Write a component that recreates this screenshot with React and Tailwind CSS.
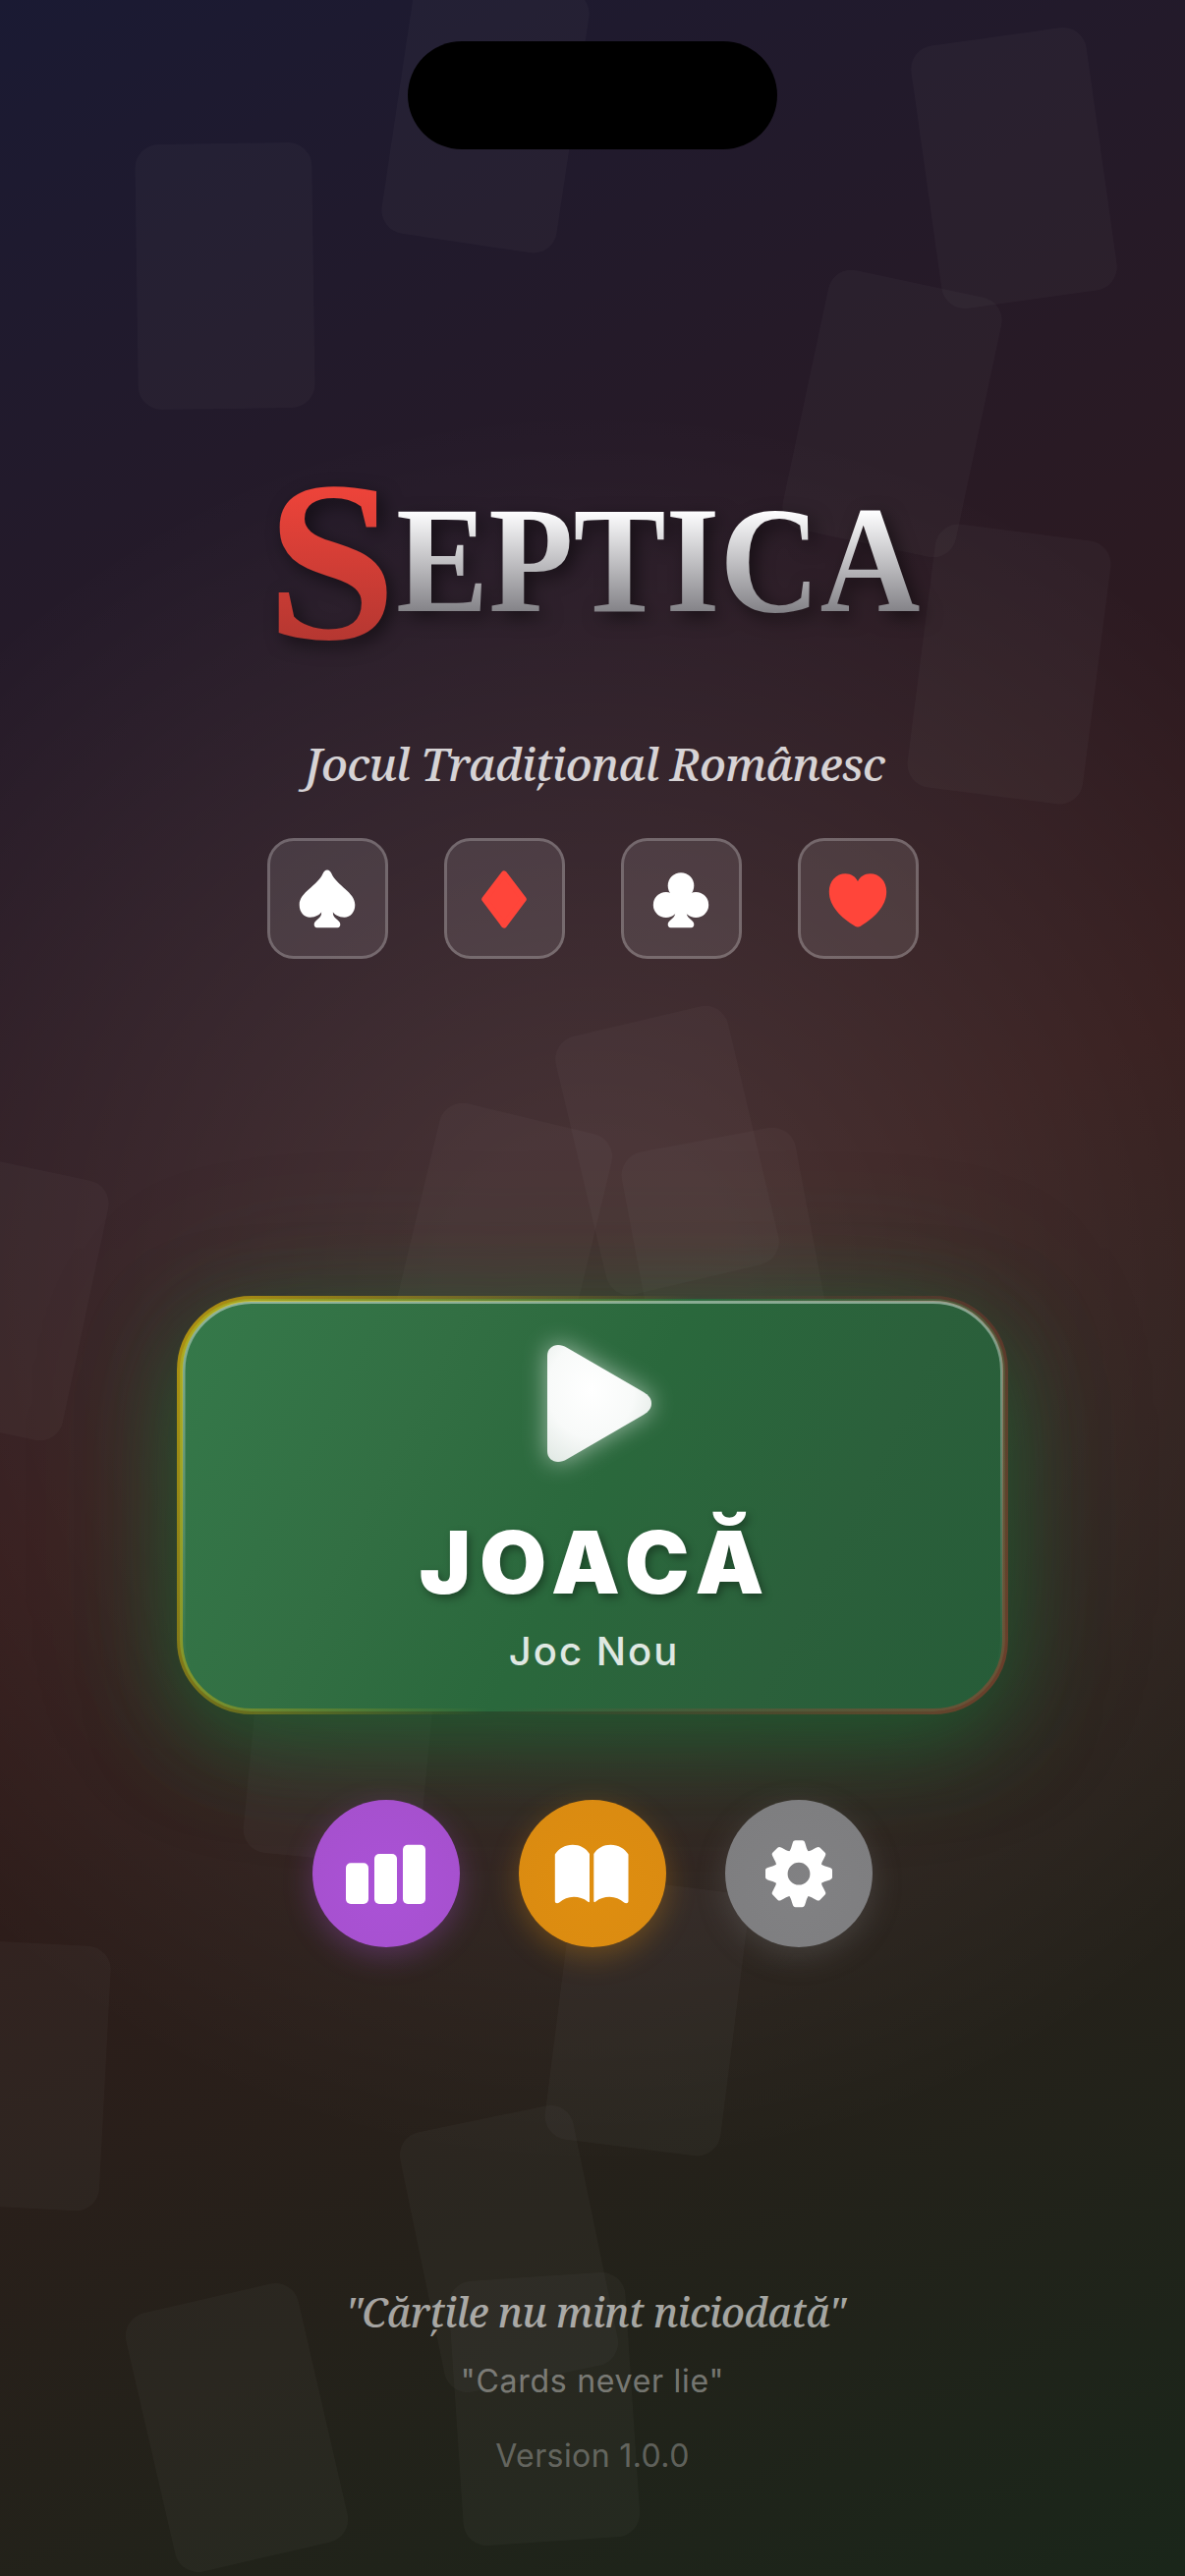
import React from "react";

const FLOATING_CARDS = [
  { x: 229, y: 281, r: -0.8 },
  { x: 493.5, y: 113.5, r: 8.5 },
  { x: 1031.5, y: 171, r: -8 },
  { x: 907.5, y: 421, r: 12 },
  { x: 1026.5, y: 676, r: 7.3 },
  { x: 679, y: 1171, r: -13.3 },
  { x: 509, y: 1270, r: 13.5 },
  { x: 741.5, y: 1293, r: -10.7 },
  { x: -1.5, y: 1320, r: 12 },
  { x: 348, y: 1758, r: 5.5 },
  { x: 17.3, y: 2111.7, r: 3 },
  { x: 657.5, y: 2052, r: 7.2 },
  { x: 518, y: 2289, r: -11.7 },
  { x: 554, y: 2451.5, r: -3.8 },
  { x: 240.5, y: 2471, r: -13 },
];

function FloatingCards() {
  return (
    <div className="pointer-events-none absolute inset-0 overflow-hidden">
      {FLOATING_CARDS.map((c, i) => (
        <div
          key={i}
          className="absolute -mt-[135px] -ml-[90px] h-[270px] w-[180px] rounded-[24px] bg-white/[0.028]"
          style={{ left: c.x, top: c.y, transform: `rotate(${c.r}deg)` }}
        />
      ))}
    </div>
  );
}

const STEM =
  "M60 66 L66 73.5 C65.5 76 66.5 78 69.5 80.5 C72 82.5 73.3 84 73.3 86 C73.3 88 72.3 89.2 70.5 89.2 L49.5 89.2 C47.7 89.2 46.7 88 46.7 86 C46.7 84 48 82.5 50.5 80.5 C53.5 78 54.5 76 54 73.5 Z";

function Spade() {
  return (
    <svg viewBox="0 0 120 120" className="size-[120px] shrink-0 fill-white">
      <path d="M60 30.5 C62 30.5 63.3 32 64.2 33.8 C70 47 88.3 53 88.3 66 C88.3 73.5 83.5 78.7 77.5 78.7 C71.5 78.7 67 75.5 65.6 73 L54.4 73 C53 75.5 48.5 78.7 42.5 78.7 C36.5 78.7 31.7 73.5 31.7 66 C31.7 53 50 47 55.8 33.8 C56.7 32 58 30.5 60 30.5 Z" />
      <path d={STEM} />
    </svg>
  );
}

function Diamond() {
  return (
    <svg viewBox="0 0 120 120" className="size-[120px] shrink-0 fill-[#ff453a] stroke-[#ff453a]">
      <path d="M60 34.3 L79.8 60.3 L60 86.6 L40.2 60.3 Z" strokeWidth="6" strokeLinejoin="round" />
    </svg>
  );
}

function Club() {
  return (
    <svg viewBox="0 0 120 120" className="size-[120px] shrink-0 fill-white">
      <circle cx="60" cy="46.5" r="13.3" />
      <circle cx="44.8" cy="66" r="13" />
      <circle cx="75.2" cy="66" r="13" />
      <path d="M53 52 L67 52 L70 62 L66 74 L54 74 L50 62 Z" />
      <path d={STEM} />
    </svg>
  );
}

function Heart() {
  return (
    <svg viewBox="0 0 120 120" className="size-[120px] shrink-0 fill-[#ff453a]">
      <path d="M60 42.3 C62 37.3 67 34.3 72.5 34.3 C82 34.3 89.2 42 89.2 52.5 C89.2 68 76 79.5 63.5 87.3 C62 88.3 60.8 88.6 60 88.6 C59.2 88.6 58 88.3 56.5 87.3 C44 79.5 30.8 68 30.8 52.5 C30.8 42 38 34.3 47.5 34.3 C53 34.3 58 37.3 60 42.3 Z" />
    </svg>
  );
}

function SuitTile({ children }) {
  return (
    <div className="flex size-[123px] items-center justify-center rounded-[27px] border-[3px] border-white/30 bg-white/10 bg-clip-padding">
      {children}
    </div>
  );
}

function PlayIcon() {
  return (
    <svg
      viewBox="0 0 106 119"
      className="h-[119px] w-[106px] overflow-visible drop-shadow-[0_0_12px_rgba(255,255,255,0.55)]"
    >
      <defs>
        <radialGradient id="play" cx="0.42" cy="0.38" r="0.75">
          <stop offset="0" stopColor="#ffffff" />
          <stop offset="0.55" stopColor="#f8faf9" />
          <stop offset="1" stopColor="#dfe7e2" />
        </radialGradient>
      </defs>
      <path
        fill="url(#play)"
        d="M0 11 C0 4 5 0 11 0 C14 0 17 1 20 2.7 L98 48 C103 51 106 54.5 106 59.5 C106 64.5 103 68 98 71 L20 116.3 C17 118 14 119 11 119 C5 119 0 115 0 108 Z"
      />
    </svg>
  );
}

function ButtonRim() {
  return (
    <svg viewBox="0 0 840 420" className="absolute inset-0 size-full overflow-visible fill-none">
      <defs>
        <linearGradient id="shine" gradientUnits="userSpaceOnUse" x1="0" y1="0" x2="0" y2="420">
          <stop offset="0" stopColor="#fff" stopOpacity="0.45" />
          <stop offset="0.9" stopColor="#fff" stopOpacity="0" />
        </linearGradient>
        <linearGradient id="rim" gradientUnits="userSpaceOnUse" x1="0" y1="0" x2="840" y2="420">
          <stop offset="0" stopColor="#ffcc00" stopOpacity="0.62" />
          <stop offset="0.5" stopColor="#ffcc00" stopOpacity="0" />
          <stop offset="0.5" stopColor="#ff3b30" stopOpacity="0" />
          <stop offset="1" stopColor="#ff3b30" stopOpacity="0.32" />
        </linearGradient>
      </defs>
      <rect x="4" y="3.5" width="832.5" height="413" rx="70" stroke="url(#shine)" strokeWidth="3" />
      <rect x="0" y="0" width="840" height="420" rx="73" stroke="url(#rim)" strokeWidth="6" />
    </svg>
  );
}

function PlayButton() {
  return (
    <button className="relative flex h-[420px] w-[840px] flex-col items-center rounded-[73px] bg-[linear-gradient(116.6deg,#35794a_0%,#326f43_28%,#2a683c_50%,#2b603b_75%,#265c38_100%)] shadow-[0_30px_90px_rgba(24,110,52,0.6),0_6px_150px_rgba(24,110,52,0.32)]">
      <ButtonRim />
      <div className="relative mt-[47px] ml-[14px] flex h-[119px]">
        <PlayIcon />
      </div>
      <div className="relative mt-[58px] ml-[7px] h-[88px] font-['Inter',sans-serif] text-[88px] leading-none font-black tracking-[9px] text-white [text-shadow:3px_4px_8px_rgba(0,0,0,0.35)]">
        JOACĂ
      </div>
      <div className="relative mt-[27px] ml-[3px] font-['Inter',sans-serif] text-[40px] leading-none font-[450] tracking-[2px] text-white/85">
        Joc Nou
      </div>
    </button>
  );
}

function Bars() {
  return (
    <svg viewBox="0 0 150 150" className="size-[150px] fill-white">
      <rect x="34" y="64.3" width="23" height="41.7" rx="5" />
      <rect x="63" y="55" width="23" height="51" rx="5" />
      <rect x="92" y="45.7" width="23" height="60.3" rx="5" />
    </svg>
  );
}

function Book() {
  return (
    <svg viewBox="0 0 150 150" className="size-[150px] fill-white">
      <path d="M36.8 55.5 C40.5 49.5 47 45.7 54.8 45.7 C62 45.7 68.5 49 72 55 L72 103 C72 104.5 71 104.5 70 103.5 C66 100.3 61 98.8 56 98.8 C50 98.8 45.5 101 41.5 104.2 C39.5 105.8 36.8 105.5 36.8 103 Z" />
      <path d="M111.5 55.5 C107.8 49.5 101.3 45.7 93.5 45.7 C86.3 45.7 79.8 49 76.3 55 L76.3 103 C76.3 104.5 77.3 104.5 78.3 103.5 C82.3 100.3 87.3 98.8 92.3 98.8 C98.3 98.8 102.8 101 106.8 104.2 C108.8 105.8 111.5 105.5 111.5 103 Z" />
    </svg>
  );
}

function Gear() {
  return (
    <svg viewBox="0 0 150 150" className="size-[150px]">
      <g transform="translate(75 75.2)">
        {[0, 45, 90, 135, 180, 225, 270, 315].map((a) => (
          <path
            key={a}
            transform={`rotate(${a})`}
            className="fill-white"
            d="M-11 -21 C-8.5 -24 -7.8 -26 -7.2 -28.5 L-6.2 -31.6 C-5.7 -33.3 -4.9 -34 -3.4 -34 L3.4 -34 C4.9 -34 5.7 -33.3 6.2 -31.6 L7.2 -28.5 C7.8 -26 8.5 -24 11 -21 Z"
          />
        ))}
        <circle r="17.8" className="fill-none stroke-white" strokeWidth="12.8" />
      </g>
    </svg>
  );
}

export default function App() {
  return (
    <div className="relative h-[2622px] w-[1206px] overflow-hidden bg-[linear-gradient(155.3deg,#1a1a33_0%,#331a1a_50%,#1a261a_100%)]">
      <div className="absolute inset-0 bg-[radial-gradient(circle_900px_at_50%_50%,rgba(255,255,255,0.1)_0px,rgba(255,255,255,0.1)_150px,rgba(255,255,255,0)_900px)]" />
      <FloatingCards />
      <div className="absolute top-[42px] left-[415px] h-[110px] w-[376px] rounded-full bg-black" />

      <main className="relative flex h-full flex-col items-center">
        <h1 className="mt-[454px] flex h-[234px] w-full items-start pl-[271px] font-['Liberation_Serif',serif] leading-none font-bold drop-shadow-[6px_6px_9px_rgba(0,0,0,0.5)]">
          <span className="w-[132px] origin-left scale-x-[1.02] bg-[linear-gradient(to_bottom,#f0443a_15%,#b53731_85%)] bg-clip-text text-[234px] text-transparent">
            S
          </span>
          <span className="mt-[39px] w-[590px] origin-left scale-x-[0.911] bg-[linear-gradient(to_bottom,#fdfdfe_18%,#838287_84%)] bg-clip-text text-[155px] text-transparent">
            EPTICA
          </span>
        </h1>

        <p className="mt-[66px] ml-[5px] h-[46px] font-['Noto_Serif','Liberation_Serif',serif] text-[46px] leading-[46px] font-medium tracking-[-0.75px] text-white/80 italic">
          Jocul Tradițional Românesc
        </p>

        <div className="mt-[53px] flex gap-[57px]">
          <SuitTile><Spade /></SuitTile>
          <SuitTile><Diamond /></SuitTile>
          <SuitTile><Club /></SuitTile>
          <SuitTile><Heart /></SuitTile>
        </div>

        <div className="mt-[346px] flex">
          <PlayButton />
        </div>

        <div className="relative mt-[90px] flex gap-[60px]">
          <button className="size-[150px] rounded-full bg-[radial-gradient(circle_at_50%_60%,#ab52d7,#a450cb)] shadow-[0_9px_30px_rgba(171,82,215,0.32)]">
            <Bars />
          </button>
          <button className="size-[150px] rounded-full bg-[radial-gradient(circle_at_50%_60%,#df8e0f,#d98a12)] shadow-[0_9px_30px_rgba(223,142,15,0.32)]">
            <Book />
          </button>
          <button className="size-[150px] rounded-full bg-[radial-gradient(circle_at_50%_60%,#818183,#7d7d7f)] shadow-[0_9px_30px_rgba(129,129,131,0.28)]">
            <Gear />
          </button>
        </div>

        <p className="mt-[351px] ml-[5px] h-[41px] font-['Noto_Serif','Liberation_Serif',serif] text-[41px] leading-none font-medium tracking-[-0.7px] text-white/60 italic">
          "Cărțile nu mint niciodată"
        </p>
        <p className="mt-[34px] h-[32px] font-['Inter',sans-serif] text-[32px] leading-none tracking-[0.73px] text-white/40">
          "Cards never lie"
        </p>
        <p className="mt-[44px] h-[32px] font-['Inter',sans-serif] text-[32px] leading-none tracking-[0.4px] text-white/30">
          Version 1.0.0
        </p>
      </main>
    </div>
  );
}
